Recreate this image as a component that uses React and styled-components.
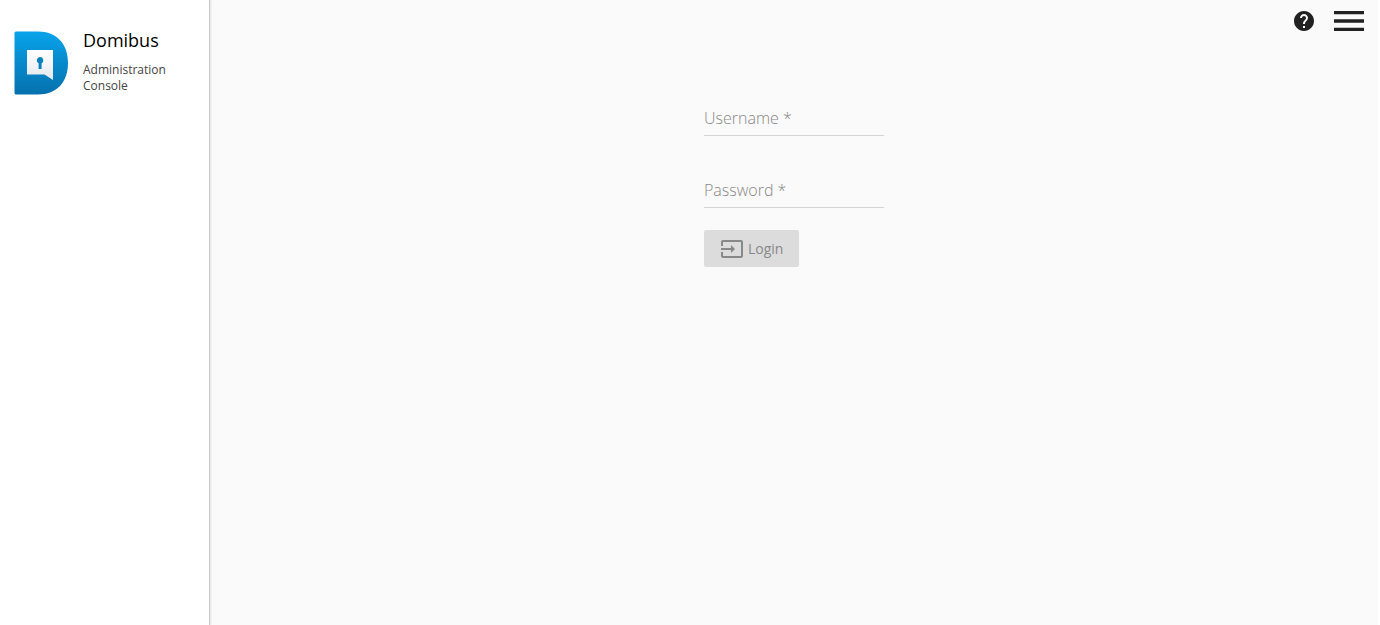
import React, { useState } from 'react'
import styled, { createGlobalStyle } from "styled-components";
import { MdHelp, MdInput, MdMenu } from "react-icons/md";


function Logo() {
  return (
    <LogoSvg width="54" height="64" viewBox="0 0 54 64" aria-hidden="true">
      <defs>
        <linearGradient id="logo-blue" x1="0" y1="0" x2="0" y2="1">
          <stop offset="0" stopColor="#08a3ea" />
          <stop offset="1" stopColor="#0571ae" />
        </linearGradient>
        <linearGradient id="logo-paper" x1="0" y1="0" x2="0" y2="1">
          <stop offset="0" stopColor="#ffffff" />
          <stop offset="1" stopColor="#e4e8ec" />
        </linearGradient>
      </defs>
      <path fill="url(#logo-blue)" d="M2 .5H24C43 .5 54 13 54 32S43 63.500 24 63.500H2A1.500 1.500 0 0 1 .5 62V2A1.500 1.500 0 0 1 2 .5Z" />
      <path fill="url(#logo-paper)" d="M13 19H39V49L30.500 43.500H13Z" />
      <path fill="#0780bf" d="M26 26A3.300 3.300 0 0 1 27.600 32.200V38H24.600V32.200A3.300 3.300 0 0 1 26 26Z" />
    </LogoSvg>
  )
}

function TextField({ id, label, type, value, onChange }) {
  return (
    <Field>
      <input id={id} type={type} value={value} placeholder=" " required onChange={(e) => onChange(e.target.value)} />
      <label htmlFor={id}>{label} *</label>
    </Field>
  )
}

function App() {
  const [username, setUsername] = useState("")
  const [password, setPassword] = useState("")

  return (
    <Page>
      <GlobalStyle />
      <Sidebar>
        <Brand>
          <Logo />
          <div>
            <Title>Domibus</Title>
            <Subtitle>Administration Console</Subtitle>
          </div>
        </Brand>
      </Sidebar>

      <Main>
        <Toolbar>
          <IconButton type="button" aria-label="Help" $size={24}>
            <MdHelp />
          </IconButton>
          <IconButton type="button" aria-label="Menu" $size={40}>
            <MdMenu />
          </IconButton>
        </Toolbar>
        <LoginForm onSubmit={(e) => e.preventDefault()}>
          <Fields>
            <TextField id="username" label="Username" type="text" value={username} onChange={setUsername} />
            <TextField id="password" label="Password" type="password" value={password} onChange={setPassword} />
          </Fields>
          <LoginButton type="submit" disabled={!username || !password}>
            <MdInput />
            <span>Login</span>
          </LoginButton>
        </LoginForm>
      </Main>
    </Page>
  )
}

export default App

const GlobalStyle = createGlobalStyle`
  * {
    box-sizing: border-box;
  }
  body {
    margin: 0;
    background: #fafafa;
    color: #212121;
    font-family: "Open Sans", sans-serif;
  }
  button, input {
    font-family: inherit;
  }
`

const Page = styled.div`
  display: flex;
  min-height: 100vh;
`

const Sidebar = styled.aside`
  flex: 0 0 210px;
  background: #fff;
  border-right: 1px solid #c8c8c8;
  box-shadow: 1px 0 2px rgba(0, 0, 0, 0.1);
`

const Brand = styled.div`
  display: flex;
  gap: 15px;
  padding: 31px 24px 0 14px;
`

const LogoSvg = styled.svg`
  flex-shrink: 0;
`

const Title = styled.h1`
  margin: 0;
  font-size: 18px;
  font-weight: 400;
  line-height: 18px;
  color: #000;
`

const Subtitle = styled.p`
  margin: 13px 0 0;
  font-size: 12px;
  font-weight: 400;
  line-height: 16px;
  color: #444;
`

const Main = styled.main`
  flex: 1;
  min-width: 0;
  border-right: 2px solid #fdfdfd;
`

const Toolbar = styled.header`
  display: flex;
  align-items: center;
  justify-content: flex-end;
  gap: 13px;
  height: 42px;
  padding-right: 9px;
`

const IconButton = styled.button`
  display: flex;
  padding: 0;
  border: 0;
  background: none;
  color: #212121;
  cursor: pointer;

  svg {
    width: ${(p) => p.$size}px;
    height: ${(p) => p.$size}px;
  }
`

const LoginForm = styled.form`
  display: flex;
  flex-direction: column;
  align-items: flex-start;
  gap: 22px;
  width: 180px;
  margin: 62px auto 0;
`

const Fields = styled.div`
  display: flex;
  flex-direction: column;
  gap: 40px;
  width: 100%;
`

const Field = styled.div`
  position: relative;

  input {
    display: block;
    width: 100%;
    height: 32px;
    padding: 0;
    border: 0;
    border-bottom: 1px solid #d4d4d4;
    outline: none;
    background: transparent;
    font-size: 16px;
  }
  label {
    position: absolute;
    top: 2px;
    left: 0;
    font-size: 16px;
    font-weight: 300;
    line-height: 24px;
    color: #888;
    pointer-events: none;
    transition: 200ms;
  }
  input:focus + label,
  input:not(:placeholder-shown) + label {
    top: -18px;
    font-size: 12px;
  }
`

const LoginButton = styled.button`
  display: flex;
  align-items: center;
  gap: 4px;
  height: 37px;
  padding: 0 16px;
  border: 0;
  border-radius: 2px;
  background: #0571ae;
  color: #fff;
  font-size: 14px;
  line-height: 36px;
  cursor: pointer;

  &:disabled {
    background: #dcdcdc;
    color: #888;
    cursor: default;
  }
  svg {
    width: 24px;
    height: 24px;
  }
`
